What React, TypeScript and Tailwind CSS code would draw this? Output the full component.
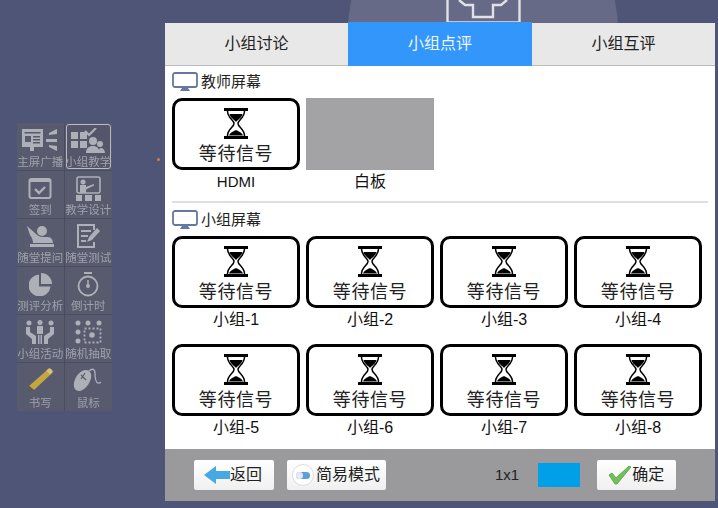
import type React from "react"

const Hourglass = () => (
  <svg width="24" height="31" viewBox="0 0 24 31" className="block">
    <path d="M0 1.500h24M0 29.500h24" stroke="#000" strokeWidth="3" />
    <path d="M3.500 3c0 7 6.500 9 6.500 12.500S3.500 21 3.500 28M20.500 3c0 7-6.500 9-6.500 12.500S20.500 21 20.500 28" fill="none" stroke="#000" strokeWidth="1.500" />
    <path d="M5.500 6h13c-1 4-4.500 5.500-6.500 8-2-2.500-5.500-4-6.500-8z" fill="#000" />
    <path d="M5 27.500c1-3 5-4.500 7-5.500 2 1 6 2.500 7 5.500z" fill="#000" />
  </svg>
)

const Monitor = () => (
  <svg width="26" height="20" viewBox="0 0 26 20" className="block">
    <rect x="1" y="1" width="24" height="14" rx="2" fill="#fff" stroke="#6478a2" strokeWidth="1.800" />
    <path d="M10 16h6l2 3H8z" fill="#6478a2" />
  </svg>
)

const SignalCard = ({ label }: { label: string }) => (
  <div className="flex w-[128px] flex-col items-center">
    <div className="flex h-[72px] w-full flex-col items-center rounded-[10px] border-[3px] border-black bg-white pt-[7px]">
      <Hourglass />
      <span className="mt-[3px] text-[18px] leading-[24px] tracking-[0.6px] text-[#222]">等待信号</span>
    </div>
    <span className={`mt-[1px] leading-[22px] text-[#111] ${label === "HDMI" ? "text-[15px]" : "text-[16px]"}`}>{label}</span>
  </div>
)

const c = "#aeb0b8"

const sideItems: { label: string; icon: React.ReactNode; active?: boolean }[] = [
  {
    label: "主屏广播",
    icon: (
      <svg width="36" height="24" viewBox="0 0 36 24">
        <rect x="0" y="1" width="21" height="18" fill={c} />
        <path d="M2.500 4h16v1.500h-16zM3 8h6v6H3z" fill="#585b6e" />
        <path d="M11 8h7v1.500h-7zM11 11h7v1.500h-7zM11 14h7v1.500h-7z" fill="#585b6e" />
        <path d="M8 19h4v4H8z" fill={c} />
        <path d="M27 5l8-4v5l-8 1zM24 11h11v3H24zM27 17l8 1v5l-8-4z" fill={c} />
      </svg>
    ),
  },
  {
    label: "小组教学",
    active: true,
    icon: (
      <svg width="34" height="25" viewBox="0 0 34 25">
        <path d="M0 4h7v7H0zM9 4h7v7H9zM0 13h7v7H0zM9 13h7v7H9z" fill={c} />
        <path d="M14 3l4 4 7-7" fill="none" stroke={c} strokeWidth="2.200" />
        <circle cx="22" cy="13" r="4" fill={c} />
        <path d="M15 25c0-5 3-7 7-7s6 2 7 7z" fill={c} />
        <circle cx="29" cy="16" r="3" fill={c} />
        <path d="M28 25c0-3 0-5 2-5s4 2 4 5z" fill={c} />
      </svg>
    ),
  },
  {
    label: "签到",
    icon: (
      <svg width="24" height="22" viewBox="0 0 24 22">
        <rect x="1.500" y="2" width="21" height="19" rx="2" fill="none" stroke={c} strokeWidth="2" />
        <path d="M1 2h22v3H1z" fill={c} />
        <path d="M7 12l4 4 6-6" fill="none" stroke={c} strokeWidth="2.400" />
      </svg>
    ),
  },
  {
    label: "教学设计",
    icon: (
      <svg width="25" height="25" viewBox="0 0 25 25">
        <rect x="1" y="1" width="23" height="16" rx="2" fill="none" stroke={c} strokeWidth="1.600" />
        <circle cx="7" cy="6" r="2.500" fill={c} />
        <path d="M4 9h6v8H4zM10 11l8-3v1.500l-8 4z" fill={c} />
        <path d="M0 19h6v6H0zM9 19h7v6H9zM19 19h6v6h-6z" fill={c} />
      </svg>
    ),
  },
  {
    label: "随堂提问",
    icon: (
      <svg width="28" height="23" viewBox="0 0 28 23">
        <circle cx="16" cy="6" r="5" fill={c} />
        <path d="M1 1l8 7c2 2 4 4 8 4h5c3 0 5 3 5 6H7c0-3-1-5-3-8z" fill={c} />
        <path d="M4 19h24v3H4z" fill={c} />
      </svg>
    ),
  },
  {
    label: "随堂测试",
    icon: (
      <svg width="24" height="24" viewBox="0 0 24 24">
        <path d="M18 18v5H2V1h16v5" fill="none" stroke={c} strokeWidth="2" />
        <path d="M5 6h10v2H5zM5 11h7v2H5zM5 16h5v2H5z" fill={c} />
        <path d="M11 18l2-5 8-9 3 3-8 9z" fill={c} />
      </svg>
    ),
  },
  {
    label: "测评分析",
    icon: (
      <svg width="23" height="23" viewBox="0 0 23 23">
        <path d="M10 1.500v12h11.500A11 11 0 1 1 10 1.500z" fill={c} />
        <path d="M12 0a11 11 0 0 1 11 11H12z" fill={c} />
      </svg>
    ),
  },
  {
    label: "倒计时",
    icon: (
      <svg width="22" height="25" viewBox="0 0 22 25">
        <path d="M7 1h8" stroke={c} strokeWidth="2" />
        <circle cx="11" cy="14" r="9.500" fill="none" stroke={c} strokeWidth="1.800" />
        <path d="M11 8v5" stroke={c} strokeWidth="1.500" />
        <circle cx="11" cy="14" r="2" fill={c} />
      </svg>
    ),
  },
  {
    label: "小组活动",
    icon: (
      <svg width="28" height="25" viewBox="0 0 28 25">
        <circle cx="3" cy="3" r="2.500" fill={c} />
        <circle cx="14" cy="2.500" r="2.500" fill={c} />
        <circle cx="25" cy="3" r="2.500" fill={c} />
        <path d="M11 6h6v8h-6zM0 7h4v5l6 4v8H6v-5l-6-5zM28 7h-4v5l-6 4v8h4v-5l6-5z" fill={c} />
        <path d="M12 15h1.500v9H12zM14.500 15H16v9h-1.500z" fill={c} />
      </svg>
    ),
  },
  {
    label: "随机抽取",
    icon: (
      <svg width="27" height="24" viewBox="0 0 27 24">
        <circle cx="3" cy="3" r="2.500" fill={c} />
        <circle cx="13" cy="3" r="2.500" fill={c} />
        <circle cx="24" cy="3" r="2.500" fill={c} />
        <circle cx="3" cy="12" r="2.500" fill={c} />
        <circle cx="3" cy="21" r="2.500" fill={c} />
        <circle cx="17" cy="15" r="2.800" fill={c} />
        <rect x="9.500" y="8.500" width="16" height="14" fill="none" stroke={c} strokeWidth="1.800" strokeDasharray="2 2" />
      </svg>
    ),
  },
  {
    label: "书写",
    icon: (
      <svg width="26" height="26" viewBox="0 0 26 26">
        <path d="M19 3l4 4L7 22l-5-4z" fill="#c4a53f" />
        <path d="M19 3l2-2c1-1 2-1 3 0l1 1c1 1 1 2 0 3l-2 2z" fill="#d8c26a" />
        <path d="M1 25l1-7 5 4z" fill="#5c5a50" />
      </svg>
    ),
  },
  {
    label: "鼠标",
    icon: (
      <svg width="30" height="25" viewBox="0 0 30 25">
        <path d="M1 15C2 8 8 2 13 2c4 0 6 4 5 8-1 6-7 13-12 13-3 0-6-3-5-8z" fill={c} />
        <path d="M8 7l5 5M12 5l-4 6" stroke="#585b6e" strokeWidth="1.200" />
        <path d="M16 3c3-3 6-2 6 2s0 9 3 10c1 .5 2 0 3-1" fill="none" stroke={c} strokeWidth="1.300" />
      </svg>
    ),
  },
]

const ToolButton = ({ children, className }: { children: React.ReactNode; className: string }) => (
  <button className={`flex h-[30px] items-center rounded-[2px] bg-gradient-to-b from-white to-[#f0f0f0] text-[16px] leading-none text-[#222] ${className}`}>
    {children}
  </button>
)

export default function App() {
  return (
    <div
      className="relative h-[508px] w-[718px] overflow-hidden bg-[#4e5576]"
      style={{ fontFamily: '"Liberation Sans", "Noto Sans CJK SC", sans-serif' }}
    >
      {/* backdrop circle and icon */}
      <div className="absolute left-[348px] top-[-105px] h-[270px] w-[270px] rounded-full bg-[#666a86]" />
      <svg width="75" height="24" viewBox="0 0 75 24" className="absolute left-[446px] top-0">
        <path d="M1.500 0v22.500h72V0" fill="none" stroke="#e2e2e6" strokeWidth="2.400" />
        <path d="M13 0l6 5h8v12h20V5h8l6-5" fill="none" stroke="#e2e2e6" strokeWidth="2.400" />
      </svg>

      {/* left tool bar */}
      <div className="absolute left-[17px] top-[123px] grid w-[95px] grid-cols-2 bg-[#585b6e] blur-[0.4px]">
        {sideItems.map((item, i) => (
          <div
            key={item.label}
            className={`relative flex h-[48px] flex-col items-center justify-end overflow-hidden border-[#4a4d62] pb-[1px] ${i % 2 === 0 ? "border-r" : ""} ${i < 10 ? "border-b" : ""}`}
          >
            {item.active && <div className="absolute inset-[1px] rounded-[3px] border border-[#b8bac2] bg-[#55566a]" />}
            <div className="relative flex flex-1 items-center justify-center pt-[2px]">{item.icon}</div>
            <span className="relative whitespace-nowrap text-[11.5px] leading-[14px] text-[#9fa1ab]">{item.label}</span>
          </div>
        ))}
      </div>
      <div className="absolute left-[157px] top-[158px] h-[3px] w-[3px] rounded-full bg-[#c98445]" />

      {/* dialog */}
      <div className="absolute left-[165px] top-[23px] flex h-[478px] w-[550px] flex-col bg-white">
        <div className="flex h-[43px] shrink-0 border-b border-[#bdbdbd] bg-[#e8e8e8] text-[16px] text-[#222]">
          <div className="flex w-[183px] items-center justify-center">小组讨论</div>
          <div className="relative z-10 mt-[-1px] flex h-[44px] w-[184px] items-center justify-center bg-[#3296fa] text-[#eef6ff]">小组点评</div>
          <div className="flex flex-1 items-center justify-center">小组互评</div>
        </div>

        <div className="flex-1 px-[7px]">
          <div className="flex h-[32px] items-center gap-[3px]">
            <Monitor />
            <span className="text-[15px] text-[#222]">教师屏幕</span>
          </div>
          <div className="flex gap-[6px]">
            <SignalCard label="HDMI" />
            <div className="flex w-[128px] flex-col items-center">
              <div className="h-[72px] w-full bg-[#a3a3a5]" />
              <span className="mt-[1px] text-[16px] leading-[22px] text-[#111]">白板</span>
            </div>
          </div>

          <div className="mt-[8px] h-[2px] w-[536px] bg-[#dedede]" />

          <div className="mt-[1px] flex h-[32px] items-center gap-[3px]">
            <Monitor />
            <span className="text-[15px] text-[#222]">小组屏幕</span>
          </div>
          <div className="grid w-[530px] grid-cols-4 gap-x-[6px] gap-y-[13px]">
            {[1, 2, 3, 4, 5, 6, 7, 8].map(n => (
              <SignalCard key={n} label={`小组-${n}`} />
            ))}
          </div>
        </div>

        {/* footer */}
        <div className="flex h-[52px] shrink-0 items-center bg-[#9a9a9c] pl-[29px]">
          <ToolButton className="w-[80px] pl-[10px]">
            <svg width="26" height="20" viewBox="0 0 26 20">
              <path d="M0 10L12 1v5h14v8H12v5z" fill="#45a9e3" />
            </svg>
            返回
          </ToolButton>
          <ToolButton className="ml-[13px] w-[99px] pl-[5px]">
            <span className="mr-[2px] flex h-[22px] w-[22px] items-center justify-center rounded-full border border-[#dcdcdc] bg-white">
              <span className="relative h-[7px] w-[14px] rounded-full bg-[#5b9ee0]">
                <span className="absolute left-0 top-0 h-[7px] w-[7px] rounded-full bg-[#e8e8f0]" />
              </span>
            </span>
            简易模式
          </ToolButton>
          <span className="ml-[109px] text-[15px] text-[#222]">1x1</span>
          <div className="ml-[19px] h-[24px] w-[42px] bg-[#00a0e9]" />
          <ToolButton className="ml-[17px] w-[79px] pl-[11px]">
            <svg width="24" height="20" viewBox="0 0 24 20">
              <path d="M1 10l3-2 4 5L21 1l2 1L9 19h-2z" fill="#6fc25a" stroke="#4f9e43" strokeWidth="0.800" />
            </svg>
            确定
          </ToolButton>
        </div>
      </div>
    </div>
  )
}
